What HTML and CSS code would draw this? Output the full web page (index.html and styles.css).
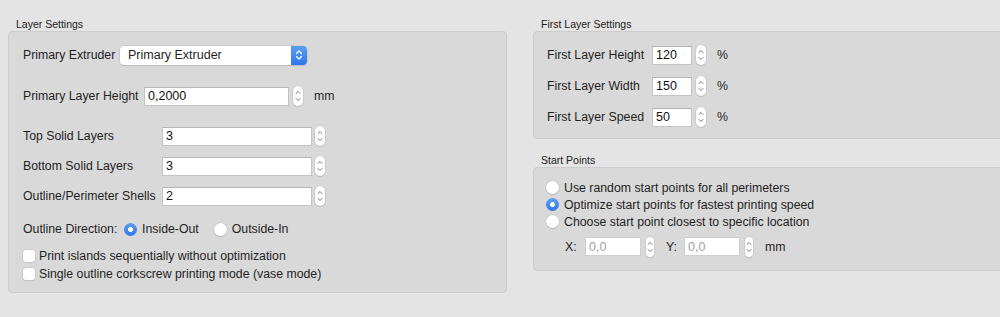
FILE: index.html
```html
<!DOCTYPE html>
<html lang="en">
  <head>
    <meta charset="UTF-8" />
    <meta name="viewport" content="width=device-width, initial-scale=1.0" />
    <title>Layer Settings</title>
    <link rel="stylesheet" href="styles.css">
  </head>
  <body>
    <div class="window">
      <!-- Coluna esquerda -->
      <section class="group group-layer">
        <h3 class="group-title">Layer Settings</h3>
        <div class="box box-layer">
          <div class="row row-extruder">
            <span class="label label-extruder">Primary Extruder</span>
            <div class="select">
              <span class="select-text">Primary Extruder</span>
              <span class="select-btn">
                <svg width="8" height="12" viewBox="0 0 8 12"><path d="M1.5 4.5 L4 2 L6.5 4.5 M1.5 7.5 L4 10 L6.5 7.5" fill="none" stroke="#fff" stroke-width="1.3" stroke-linecap="round" stroke-linejoin="round"/></svg>
              </span>
            </div>
          </div>

          <div class="row row-height">
            <span class="label label-height">Primary Layer Height</span>
            <input class="field field-height" type="text" value="0,2000">
            <span class="stepper"></span>
            <span class="unit">mm</span>
          </div>

          <div class="field-grid">
            <span class="label">Top Solid Layers</span>
            <input class="field" type="text" value="3">
            <span class="stepper"></span>

            <span class="label">Bottom Solid Layers</span>
            <input class="field" type="text" value="3">
            <span class="stepper"></span>

            <span class="label">Outline/Perimeter Shells</span>
            <input class="field" type="text" value="2">
            <span class="stepper"></span>
          </div>

          <div class="row row-direction">
            <span class="label label-direction">Outline Direction:</span>
            <span class="radio checked"></span>
            <span class="radio-text">Inside-Out</span>
            <span class="radio radio-gap"></span>
            <span class="radio-text">Outside-In</span>
          </div>

          <div class="check-row check-first">
            <span class="checkbox"></span>
            <span>Print islands sequentially without optimization</span>
          </div>
          <div class="check-row">
            <span class="checkbox"></span>
            <span>Single outline corkscrew printing mode (vase mode)</span>
          </div>
        </div>
      </section>

      <!-- Coluna direita -->
      <div class="column-right">
        <section class="group">
          <h3 class="group-title">First Layer Settings</h3>
          <div class="box box-first">
            <div class="row row-first">
              <span class="label label-first">First Layer Height</span>
              <input class="field field-small" type="text" value="120">
              <span class="stepper"></span>
              <span class="unit unit-pct">%</span>
            </div>
            <div class="row row-first">
              <span class="label label-first">First Layer Width</span>
              <input class="field field-small" type="text" value="150">
              <span class="stepper"></span>
              <span class="unit unit-pct">%</span>
            </div>
            <div class="row row-first">
              <span class="label label-first">First Layer Speed</span>
              <input class="field field-small" type="text" value="50">
              <span class="stepper"></span>
              <span class="unit unit-pct">%</span>
            </div>
          </div>
        </section>

        <section class="group group-start">
          <h3 class="group-title">Start Points</h3>
          <div class="box box-start">
            <div class="radio-row">
              <span class="radio"></span>
              <span>Use random start points for all perimeters</span>
            </div>
            <div class="radio-row">
              <span class="radio checked"></span>
              <span>Optimize start points for fastest printing speed</span>
            </div>
            <div class="radio-row">
              <span class="radio"></span>
              <span>Choose start point closest to specific location</span>
            </div>
            <div class="row row-xy">
              <span class="label label-x">X:</span>
              <input class="field field-xy disabled" type="text" value="0,0">
              <span class="stepper stepper-xy"></span>
              <span class="label label-y">Y:</span>
              <input class="field field-xy disabled" type="text" value="0,0">
              <span class="stepper stepper-xy"></span>
              <span class="unit unit-xy">mm</span>
            </div>
          </div>
        </section>
      </div>
    </div>
  </body>
</html>
```

FILE: styles.css
```css
:root {
  --fundo: #e4e4e4;
  --caixa: #d9d9d9;
  --borda: #cdcdcd;
  --texto: #1f1f1f;
  --azul: #3f8af2;
}

* {
  margin: 0;
  padding: 0;
  box-sizing: border-box;
}

body {
  font-family: "Liberation Sans", Arial, sans-serif;
  font-size: 12.3px;
  background-color: var(--fundo);
  color: var(--texto);
  overflow: hidden;
}

.window {
  display: flex;
  gap: 26px;
  padding: 17px 0 0 8px;
  height: 317px;
}

.group-title {
  font-size: 10.5px;
  font-weight: normal;
  line-height: 14px;
  padding-left: 8px;
  color: #222;
}

.group-layer {
  width: 499px;
}

.box {
  background-color: var(--caixa);
  border: 1px solid var(--borda);
  border-radius: 4px;
}

.row {
  display: flex;
  align-items: center;
  height: 20px;
}

.label {
  white-space: nowrap;
}

/* Caixa da esquerda */
.box-layer {
  padding: 13px 14px 10px;
  height: 262px;
}

.label-extruder {
  width: 97px;
}

.select {
  width: 187px;
  height: 19px;
  display: flex;
  align-items: center;
  justify-content: space-between;
  background: #fff;
  border-radius: 4px;
  box-shadow: 0 0 0 0.5px #bdbdbd, 0 1px 1px rgba(0, 0, 0, 0.15);
}

.select-text {
  padding-left: 8px;
  font-size: 12.5px;
}

.select-btn {
  width: 16px;
  height: 19px;
  background: linear-gradient(#5b9ef6, #2f78ea);
  border-radius: 0 4px 4px 0;
  display: flex;
  align-items: center;
  justify-content: center;
}

.field {
  height: 19px;
  width: 150px;
  border: 1px solid #c4c4c4;
  border-top-color: #b5b5b5;
  background: #fff;
  font-family: "Liberation Sans", Arial, sans-serif;
  font-size: 12.5px;
  padding: 0 3px;
  color: #111;
  outline: none;
}

.field.disabled {
  color: #a0a0a0;
  border-color: #d0d0d0;
}

.stepper {
  display: inline-block;
  width: 10px;
  height: 20px;
  margin-left: 4px;
  border-radius: 5px;
  background: #fff url("data:image/svg+xml,%3Csvg xmlns='http://www.w3.org/2000/svg' width='10' height='20'%3E%3Cpath d='M3 7.5 L5 5.5 L7 7.5 M3 12.5 L5 14.5 L7 12.5' fill='none' stroke='%23777' stroke-width='1' stroke-linecap='round'/%3E%3C/svg%3E") no-repeat center;
  box-shadow: 0 0 0 0.5px #bdbdbd, 0 1px 1px rgba(0, 0, 0, 0.12);
}

.unit {
  margin-left: 11px;
}

.row-height {
  margin-top: 21px;
}

.label-height {
  width: 121px;
}

.field-height {
  width: 145px;
}

.field-grid {
  display: grid;
  grid-template-columns: 139px 150px auto;
  grid-auto-rows: 20px;
  row-gap: 10px;
  align-items: center;
  justify-content: start;
  margin-top: 20px;
}

.field-grid .stepper {
  margin-left: 3px;
}

.row-direction {
  margin-top: 15px;
  height: 16px;
}

.label-direction {
  width: 101px;
}

.radio {
  display: inline-block;
  width: 13px;
  height: 13px;
  border-radius: 50%;
  background: #fff;
  box-shadow: 0 0 0 0.5px #bdbdbd, 0 1px 1px rgba(0, 0, 0, 0.15);
  flex-shrink: 0;
}

.radio.checked {
  background: radial-gradient(circle, #fff 0 2.3px, transparent 2.8px), linear-gradient(#5b9ef6, #2f78ea);
  box-shadow: none;
}

.radio-text {
  margin-left: 5px;
}

.radio-gap {
  margin-left: 15px;
}

.check-row {
  display: flex;
  align-items: center;
  height: 18px;
  gap: 4px;
}

.check-first {
  margin-top: 10px;
}

.checkbox {
  width: 12px;
  height: 12px;
  background: #fff;
  border-radius: 3px;
  box-shadow: 0 0 0 0.5px #c2c2c2, 0 1px 1px rgba(0, 0, 0, 0.1);
}

/* Coluna da direita */
.column-right {
  flex: 1;
  margin-right: -12px;
}

.box-first {
  padding: 13px 13px 10px;
  height: 108px;
  display: flex;
  flex-direction: column;
  gap: 11px;
}

.label-first {
  width: 105px;
}

.field-small {
  width: 40px;
}

.unit-pct {
  margin-left: 11px;
}

.group-start {
  margin-top: 14px;
}

.box-start {
  padding: 11px 12px 13px;
  height: 104px;
}

.radio-row {
  display: flex;
  align-items: center;
  gap: 5px;
  height: 17px;
}

.row-xy {
  margin-top: 7px;
  height: 19px;
}

.label-x {
  margin-left: 19px;
  width: 20px;
}

.field-xy {
  width: 56px;
}

.stepper-xy {
  width: 8px;
  margin-left: 5px;
}

.label-y {
  margin-left: 12px;
  width: 18px;
}

.unit-xy {
  margin-left: 12px;
}
```
